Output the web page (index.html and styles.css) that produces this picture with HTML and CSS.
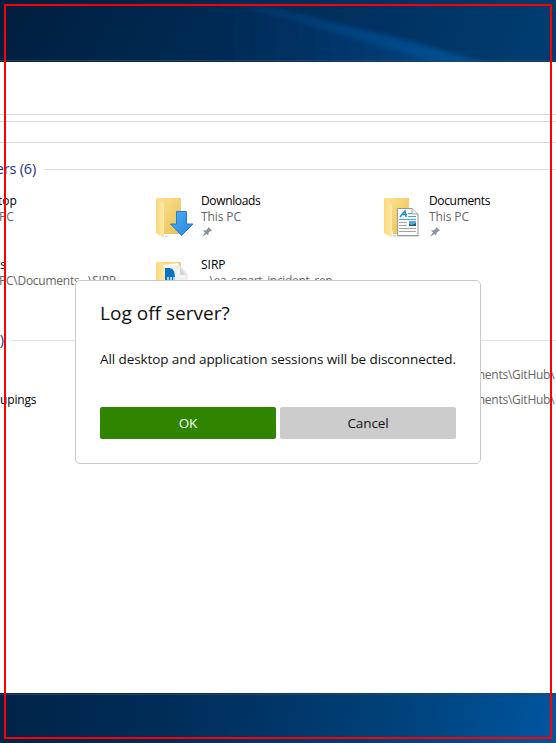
FILE: index.html
```html
<!DOCTYPE html>
<html lang="en">
<head>
<meta charset="utf-8">
<title>Log off server?</title>
<link rel="stylesheet" href="styles.css">
</head>
<body>
<div class="desktop">
  <div class="wallpaper wallpaper-top">
    <svg width="556" height="62" viewBox="0 0 556 62">
      <defs>
        <linearGradient id="sky" x1="0" x2="1" y1="0" y2=".06"><stop offset="0" stop-color="#001e3f"/><stop offset=".3" stop-color="#00274d"/><stop offset=".5" stop-color="#002c58"/><stop offset=".75" stop-color="#003464"/><stop offset="1" stop-color="#003c70"/></linearGradient>
        <linearGradient id="ray" x1="200" x2="485" y1="0" y2="0" gradientUnits="userSpaceOnUse"><stop offset="0" stop-color="#00366a" stop-opacity=".1"/><stop offset=".35" stop-color="#003d75"/><stop offset=".75" stop-color="#004b8c"/><stop offset="1" stop-color="#005293"/></linearGradient>
        <linearGradient id="below" x1="220" x2="440" y1="0" y2="0" gradientUnits="userSpaceOnUse"><stop offset="0" stop-color="#003467" stop-opacity="0"/><stop offset="1" stop-color="#00407d"/></linearGradient>
        <filter id="soft" x="-20%" y="-50%" width="140%" height="200%"><feGaussianBlur stdDeviation="2.5"/></filter>
      </defs>
      <rect width="556" height="62" fill="url(#sky)"/>
      <path d="M210 0 L278 12 L410 42 L490 70 L220 80Z" fill="url(#below)" filter="url(#soft)"/>
      <path d="M205 -4 L278 9 L410 42 L500 67 L450 70 L400 52 L300 22Z" fill="url(#ray)" filter="url(#soft)"/>
    </svg>
  </div>
  <main class="window">
    <div class="ribbon"></div>
    <div class="divider"></div>
    <div class="address"></div>
    <div class="heading heading-folders"><span class="heading-label">ers (6)</span></div>
    <div class="folders">
      <div class="folder"><div class="copy"><span class="name n-top">top</span><span class="sub s-pc">PC</span></div></div>
      <div class="folder">
        <svg class="icon" width="46" height="48" viewBox="0 0 46 48">
          <defs>
            <linearGradient id="back" x1="0" y1="0" x2="1" y2="1"><stop offset="0" stop-color="#ffe391"/><stop offset="1" stop-color="#e6bf54"/></linearGradient>
            <linearGradient id="front" x1="0" y1="0" x2="1" y2="0"><stop offset="0" stop-color="#fbd779"/><stop offset="1" stop-color="#ffe9ac"/></linearGradient>
            <linearGradient id="arrow" x1="0" y1="0" x2="1" y2="1"><stop offset="0" stop-color="#4dacf5"/><stop offset="1" stop-color="#2c87dc"/></linearGradient>
          </defs>
          <path d="M2 5H26V41H9Z" fill="url(#back)"/><path d="M1 5L9 11V45L1 40Z" fill="url(#front)"/>
          <path d="M10 45l5-2h-5z" fill="#ddd"/>
          <path d="M21.500 18.500H31.500V31H38L26.500 42.500L15.500 31H21.500Z" fill="url(#arrow)" stroke="#247ece"/>
        </svg>
        <div class="copy"><span class="name n-downloads">Downloads</span><span class="sub s-this">This PC</span>
          <svg class="pin" width="12" height="12" viewBox="0 0 12 12"><path d="M7.500 1L11 4.500L9.700 5L7.600 6.700L7.200 9.500L5.300 7.900L1 11L4 6.600L2 4.500L5.100 4.200L7.100 2Z" fill="#8b949c"/></svg>
        </div>
      </div>
      <div class="folder">
        <svg class="icon" width="45" height="48" viewBox="0 0 45 48">
          <path d="M1 5H25V41H9Z" fill="url(#back)"/><path d="M0 5L8 11V45L0 40Z" fill="url(#front)"/><path d="M9 45l5-3h-5z" fill="#ddd"/>
          <path d="M14 42h23l-2 2H13z" fill="#ddd"/>
          <path d="M13.500 15.500H28L34 21V42.500H13.500Z" fill="#fbfbfb" stroke="#999"/><path d="M28 15.500V21H34" fill="#eee" stroke="#aaa"/>
          <path d="M16 24L21 18L22 24M18 21.500H23" fill="none" stroke="#218bce" stroke-width="1.500"/>
          <path d="M24 20.500H28M24 23.500H32M15 26.500H32" stroke="#45a6dc"/>
          <path d="M15 29.500H23M15 32.500H23M15 35.500H32M15 38.500H32" stroke="#a5a5a5"/>
          <path d="M25 28H32V33H25Z" fill="#5aa9df"/><path d="M25 31L28 32L32 30V33H25Z" fill="#245c78"/>
        </svg>
        <div class="copy"><span class="name n-documents">Documents</span><span class="sub s-this">This PC</span>
          <svg class="pin" width="12" height="12" viewBox="0 0 12 12"><path d="M7.500 1L11 4.500L9.700 5L7.600 6.700L7.200 9.500L5.300 7.900L1 11L4 6.600L2 4.500L5.100 4.200L7.100 2Z" fill="#8b949c"/></svg>
        </div>
      </div>
      <div class="folder"><div class="copy"><span class="name n-ts">ts</span><span class="sub s-path">PC\Documents...\SIRP</span></div></div>
      <div class="folder">
        <svg class="icon" width="46" height="48" viewBox="0 0 46 48">
          <path d="M2 5H26V41H9Z" fill="url(#back)"/>
          <path d="M8 8L23 6L26 12V42H8Z" fill="#f7f7f7"/><path d="M17 10H26L32 17V42H17Z" fill="#f1f1f1" stroke="#ddd" stroke-width=".7"/><path d="M25 10V18H31Z" fill="#d7d7d7"/>
          <path d="M9 11H15Q20 12 20 20V42H9Z" fill="#0873c4"/><path d="M13 20v5q2 2 3 0v-4M16 20v5q2 2 3 0v-5" fill="none" stroke="#fff" stroke-width="1.300"/>
          <path d="M1 5L10 11V45L1 40Z" fill="url(#front)"/>
        </svg>
        <div class="copy"><span class="name n-sirp">SIRP</span><span class="sub s-ea">...\ea_smart_incident_rep...</span></div>
      </div>
    </div>
    <div class="heading heading-files"><span class="heading-label">)</span></div>
    <div class="files">
      <div class="file"><span></span><span class="sub s-git">ments\GitHub\</span></div>
      <div class="file"><span class="name n-upings">upings</span><span class="sub s-git">ments\GitHub\</span></div>
    </div>
  </main>
  <div class="wallpaper wallpaper-bottom"></div>
  <div class="outline"></div>
  <section class="dialog">
    <h1>Log off server?</h1>
    <p>All desktop and application sessions will be disconnected.</p>
    <div class="actions"><button class="ok">OK</button><button class="cancel">Cancel</button></div>
  </section>
</div>
</body>
</html>
```
FILE: styles.css
```css
* { box-sizing: border-box; }
body { margin: 0; font-family: "Open Sans", "Noto Sans", sans-serif; overflow: hidden; }
.desktop { position: relative; width: 556px; height: 743px; display: grid; grid-template-rows: 62px 631px 50px; overflow: hidden; }
.wallpaper { overflow: hidden; }
.wallpaper svg { display: block; }
.wallpaper-top { position: relative; }
.wallpaper-top::after { content: ""; position: absolute; inset: 60px 0 auto; height: 1px; background: #2d4254; }
.wallpaper-bottom { background: linear-gradient(transparent 1px, #2b465c 1px, #2b465c 2px, transparent 2px), linear-gradient(98deg, #002348 0%, #002b54 25%, #003567 48%, #004178 70%, #0055a0 100%); }
.window { background: #fff; display: flex; flex-direction: column; min-width: 0; overflow: hidden; }
.ribbon { height: 53px; border-bottom: 1px solid #d9d9d9; }
.divider { height: 7px; border-bottom: 1px solid #d9d9d9; }
.address { height: 21px; border-bottom: 1px solid #d9d9d9; }
.heading { display: flex; align-items: center; height: 24px; color: #1e3287; font-size: 14.500px; gap: 8px; }
.heading::after { content: ""; flex: 1; height: 1px; background: #e2e2e2; }
.heading-label { display: flex; justify-content: flex-end; white-space: nowrap; line-height: 24px; }
.heading-folders { margin-top: 14px; }
.heading-folders .heading-label { width: 36px; letter-spacing: -.2px; }
.heading-files { margin-top: 7px; }
.heading-files .heading-label { width: 4px; }
.folders { margin-top: 12px; display: grid; grid-template-columns: 155px 229px 172px; grid-auto-rows: 64px; }
.folder { display: flex; min-width: 0; }
.icon { flex: none; }
.copy { display: flex; flex-direction: column; align-items: flex-start; font-size: 12px; line-height: 16px; white-space: nowrap; }
.name { color: #000; }
.sub { color: #666; }
.pin { margin-top: 1px; }
.n-top { margin-left: -2px; }
.s-pc { margin-left: -1px; }
.n-ts { margin-left: -4px; }
.s-path { margin-left: -1px; letter-spacing: -.25px; }
.n-downloads, .n-documents { letter-spacing: -.35px; }
.s-ea { letter-spacing: -.33px; }
.s-git { letter-spacing: -.25px; margin-left: -2px; }
.s-this { letter-spacing: -.1px; }
.n-upings { letter-spacing: -.15px; }
.files { margin-top: 10px; }
.file { height: 25px; display: grid; grid-template-columns: 476px 80px; align-items: center; font-size: 12px; white-space: nowrap; }
.outline { position: absolute; inset: 4px; border: 2px solid #f00; pointer-events: none; }
.dialog { position: absolute; left: 75px; top: 280px; width: 406px; height: 184px; padding: 20px 24px 24px; border: 1px solid #c9c9c9; border-radius: 5px; background: #fff; color: #111; }
.dialog h1 { margin: 0; font-size: 19px; font-weight: 400; line-height: 25px; letter-spacing: .03px; white-space: nowrap; }
.dialog p { margin: 23px 0 0; font-size: 13.500px; line-height: 20px; letter-spacing: -.09px; white-space: nowrap; }
.actions { margin-top: 38px; display: grid; grid-template-columns: 176px 176px; gap: 4px; }
.actions button { height: 32px; padding: 0; border: 0; border-radius: 2px; font: 13.500px "Open Sans", sans-serif; letter-spacing: -.1px; }
.ok { background: #2f8500; color: #fff; }
.cancel { background: #ccc; color: #111; }
```
